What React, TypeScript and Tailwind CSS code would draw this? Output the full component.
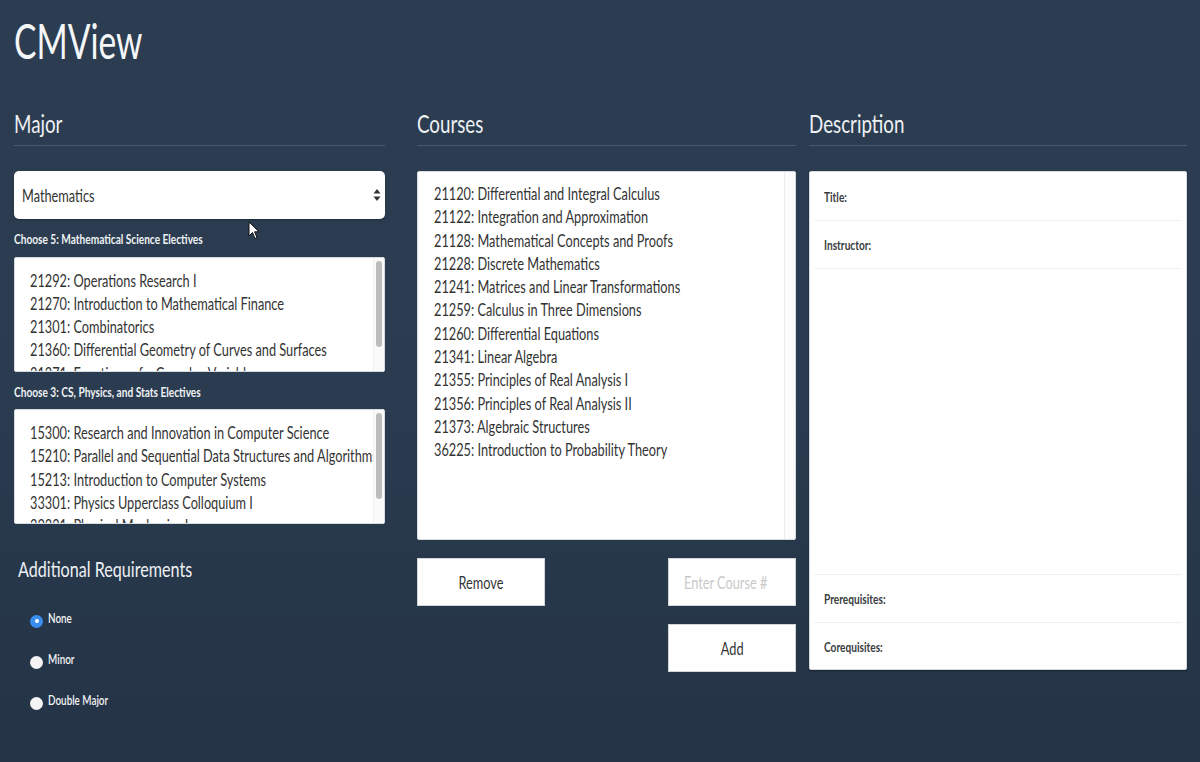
import type { ReactNode } from 'react'

function T({ children, center, className = 'scale-x-[0.75]' }: { children: ReactNode; center?: boolean; className?: string }) {
  return (
    <span className={`inline-block whitespace-nowrap ${center ? 'origin-center' : 'origin-left'} ${className}`}>
      {children}
    </span>
  )
}

const mathElectives = [
  '21292: Operations Research I',
  '21270: Introduction to Mathematical Finance',
  '21301: Combinatorics',
  '21360: Differential Geometry of Curves and Surfaces',
  '21371: Functions of a Complex Variable',
  '21373: Algebraic Structures',
]

const otherElectives = [
  '15300: Research and Innovation in Computer Science',
  '15210: Parallel and Sequential Data Structures and Algorithms',
  '15213: Introduction to Computer Systems',
  '33301: Physics Upperclass Colloquium I',
  '33331: Physical Mechanics I',
  '36401: Modern Regression',
]

const courses = [
  '21120: Differential and Integral Calculus',
  '21122: Integration and Approximation',
  '21128: Mathematical Concepts and Proofs',
  '21228: Discrete Mathematics',
  '21241: Matrices and Linear Transformations',
  '21259: Calculus in Three Dimensions',
  '21260: Differential Equations',
  '21341: Linear Algebra',
  '21355: Principles of Real Analysis I',
  '21356: Principles of Real Analysis II',
  '21373: Algebraic Structures',
  '36225: Introduction to Probability Theory',
]

function Heading({ children }: { children: ReactNode }) {
  return (
    <div className="border-b border-[#475a6e] pb-[9px] text-[25px] leading-none text-[#eef1f4]">
      <T>{children}</T>
    </div>
  )
}

function ScrollList({ items }: { items: string[] }) {
  return (
    <div className="flex h-[115px] overflow-hidden rounded-[2px] border border-[#d6dbe0] bg-white">
      <div className="flex-1 overflow-hidden pl-[15px] pt-[11px]">
        {items.map((c) => (
          <div key={c} className="text-[17px] leading-[23.3px] text-[#333]">
            <T>{c}</T>
          </div>
        ))}
      </div>
      <div className="w-[11px] border-l border-[#f0f0f0] bg-[#fafafa] px-[2px] py-[3px]">
        <div className="h-[86px] rounded-full bg-[#bdbdbd]" />
      </div>
    </div>
  )
}

function Radio({ label, checked }: { label: string; checked?: boolean }) {
  return (
    <div className="flex h-[41px] items-center pl-[16px]">
      {checked ? (
        <span className="flex h-[13px] w-[13px] items-center justify-center rounded-full bg-[#3a8ff2]">
          <span className="h-[4px] w-[4px] rounded-full bg-white" />
        </span>
      ) : (
        <span className="h-[13px] w-[13px] rounded-full bg-[#f4f4f4]" />
      )}
      <span className="-mt-[6px] ml-[5px] text-[13px] font-semibold leading-none text-[#f2f2f2]">
        <T className="scale-x-[0.76]">{label}</T>
      </span>
    </div>
  )
}

function DescRow({ label, h = 'h-[49px]' }: { label: string; h?: string }) {
  return (
    <div className={`mx-[4px] flex ${h} items-center border-b border-[#f1f1f1] pl-[10px] pt-[3px]`}>
      <span className="text-[13.5px] font-bold leading-none text-[#3a3d42]">
        <T>{label}</T>
      </span>
    </div>
  )
}

function Cursor() {
  return (
    <svg className="absolute left-[248px] top-[221px]" width="12" height="19" viewBox="0 0 12 19">
      <path d="M1 1 L1 15 L4.5 11.5 L7 17.5 L9 16.6 L6.6 10.8 L11 10.8 Z" fill="#fff" stroke="#111" strokeWidth="1" strokeLinejoin="round" />
    </svg>
  )
}

export default function App() {
  return (
    <div className="relative h-[762px] w-[1200px] overflow-hidden bg-linear-to-b from-[#2c3d51] via-[#2b3c50] to-[#243346] pl-[14px] font-['Lato','Liberation_Sans',sans-serif]">
      {/* title */}
      <div className="h-[111px] pt-[17px] text-[48px] leading-none text-[#f4f6f8]">
        <T className="scale-x-[0.7]">CMView</T>
      </div>

      <div className="flex items-start">
        {/* Major column */}
        <div className="w-[371px]">
          <Heading>Major</Heading>
          <div className="mt-[25px] flex h-[48px] items-center justify-between rounded-[5px] bg-white pl-[8px] pr-[4px] shadow-[0_1px_2px_rgba(0,0,0,0.3)]">
            <span className="text-[17px] leading-none text-[#333]">
              <T>Mathematics</T>
            </span>
            <svg width="8" height="14" viewBox="0 0 8 14">
              <path d="M4 1 L7.5 5.5 L0.5 5.5 Z" fill="#333" />
              <path d="M4 13 L7.5 8.5 L0.5 8.5 Z" fill="#333" />
            </svg>
          </div>
          <div className="mt-[14px] text-[13.5px] font-bold leading-none text-[#eef1f4]">
            <T>Choose 5: Mathematical Science Electives</T>
          </div>
          <div className="mt-[10px]">
            <ScrollList items={mathElectives} />
          </div>
          <div className="mt-[14px] text-[13.5px] font-bold leading-none text-[#eef1f4]">
            <T>Choose 3: CS, Physics, and Stats Electives</T>
          </div>
          <div className="mt-[10px]">
            <ScrollList items={otherElectives} />
          </div>
          <div className="ml-[4px] mt-[35px] text-[21.5px] leading-none text-[#eef1f4]">
            <T>Additional Requirements</T>
          </div>
          <div className="mt-[20px] flex flex-col">
            <Radio label="None" checked />
            <Radio label="Minor" />
            <Radio label="Double Major" />
          </div>
        </div>

        {/* Courses column */}
        <div className="ml-[32px] w-[379px]">
          <Heading>Courses</Heading>
          <div className="mt-[25px] flex h-[369px] overflow-hidden rounded-[2px] border border-[#d6dbe0] bg-white">
            <div className="flex-1 overflow-hidden pl-[16px] pt-[10px]">
              {courses.map((c) => (
                <div key={c} className="text-[17px] leading-[23.3px] text-[#333]">
                  <T>{c}</T>
                </div>
              ))}
            </div>
            <div className="w-[11px] border-l border-[#ececec] bg-[#fcfcfc]" />
          </div>
          <div className="mt-[18px] flex">
            <button className="flex h-[48px] w-[128px] items-center justify-center border border-[#d0d5da] bg-white text-[17px] leading-none text-[#333]">
              <T center>Remove</T>
            </button>
            <div className="ml-auto flex h-[48px] w-[128px] items-center border border-[#d0d5da] bg-white pl-[15px] text-[17px] leading-none text-[#c9c9c9]">
              <T>Enter Course #</T>
            </div>
          </div>
          <div className="mt-[18px] flex justify-end">
            <button className="flex h-[48px] w-[128px] items-center justify-center border border-[#d0d5da] bg-white text-[17px] leading-none text-[#333]">
              <T center>Add</T>
            </button>
          </div>
        </div>

        {/* Description column */}
        <div className="ml-[13px] w-[378px]">
          <Heading>Description</Heading>
          <div className="mt-[25px] flex h-[499px] flex-col rounded-[2px] border border-[#d6dbe0] bg-white shadow-[0_1px_2px_rgba(0,0,0,0.35)]">
            <DescRow label="Title:" />
            <DescRow label="Instructor:" h="h-[48px]" />
            <div className="mx-[4px] flex-1 border-b border-[#f1f1f1]" />
            <DescRow label="Prerequisites:" h="h-[48px]" />
            <div className="mx-[4px] flex h-[46px] items-center pl-[10px] pt-[4px]">
              <span className="text-[13.5px] font-bold leading-none text-[#3a3d42]">
                <T>Corequisites:</T>
              </span>
            </div>
          </div>
        </div>
      </div>

      <Cursor />
    </div>
  )
}
